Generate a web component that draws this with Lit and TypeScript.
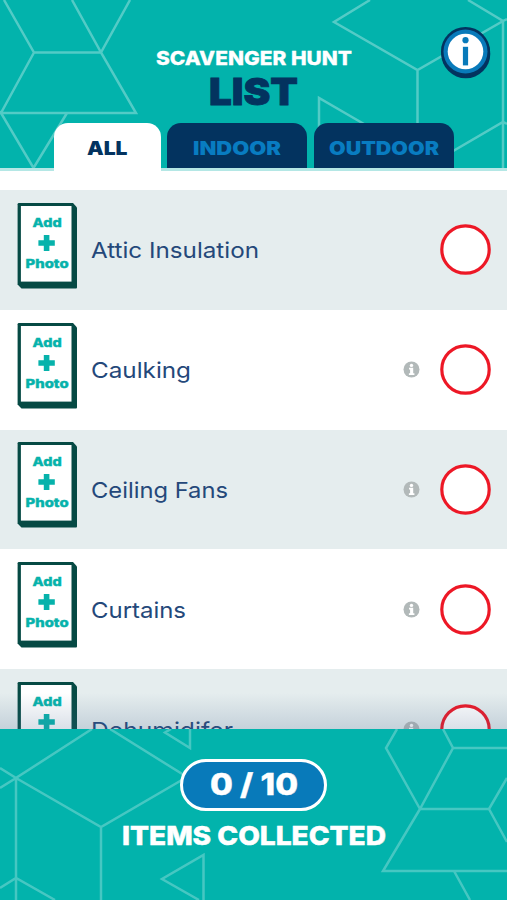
import { LitElement, html, svg, css, nothing } from "lit";
import { customElement, property, state } from "lit/decorators.js";
import { classMap } from "lit/directives/class-map.js";

/** One line of text stretched to a fixed measure, for the wide display lettering. */
@customElement("fit-text")
export class FitText extends LitElement {
  @property() text = "";
  @property({ type: Number }) measure = 100;
  @property({ type: Number }) size = 16;

  static styles = css`
    :host { display: block; line-height: 0; }
    svg { display: block; overflow: visible; }
    text { font-family: Inter, "Open Sans", sans-serif; fill: currentColor; }
  `;

  render() {
    const cap = this.size * 0.727;
    return html`<svg width=${this.measure} height=${cap}>
      ${svg`<text x="0" y=${cap} font-size=${this.size} textLength=${this.measure} lengthAdjust="spacingAndGlyphs">${this.text}</text>`}
    </svg>`;
  }
}

@customElement("photo-card")
export class PhotoCard extends LitElement {
  static styles = css`
    :host { display: block; width: 60px; height: 86px; }
    svg { display: block; }
    text { font-family: Inter, sans-serif; font-weight: 800; font-size: 12.2px; fill: #06b2ab; stroke: #06b2ab; stroke-width: 0.4px; }
  `;

  render() {
    return html`<svg width="60" height="86" viewBox="0 0 60 86">
      <path d="M2 0H56L60 4.5V84.5Q60 85.6 59 85.6H4.5L.6 81.5V1.2Q.6 0 2 0Z" fill="#064a44" />
      <rect x="3.9" y="3" width="50.6" height="75.6" fill="#fff" />
      <text x="15.6" y="24" textLength="29" lengthAdjust="spacingAndGlyphs">Add</text>
      <path d="M26.8 32h5.6v5.3h5.4v5.5h-5.4V48h-5.6v-5.2h-5.4v-5.5h5.4z" fill="#06b2ab" />
      <text x="8.6" y="64.8" textLength="43" lengthAdjust="spacingAndGlyphs">Photo</text>
    </svg>`;
  }
}

interface Item {
  name: string;
  measure: number;
  info: boolean;
}

const ITEMS: Item[] = [
  { name: "Attic Insulation", measure: 168, info: false },
  { name: "Caulking", measure: 100, info: true },
  { name: "Ceiling Fans", measure: 137, info: true },
  { name: "Curtains", measure: 95, info: true },
  { name: "Dehumidifer", measure: 142, info: true },
];

const TABS = [
  { name: "ALL", measure: 40.5, width: 107 },
  { name: "INDOOR", measure: 88, width: 140 },
  { name: "OUTDOOR", measure: 110, width: 140 },
];

@customElement("app-root")
export class AppRoot extends LitElement {
  @state() private tab = "ALL";

  static styles = css`
    :host {
      display: flex;
      flex-direction: column;
      position: relative;
      width: 507px;
      height: 900px;
      overflow: hidden;
      background: #fff;
      font-family: Inter, sans-serif;
    }
    .header {
      position: relative;
      flex: none;
      height: 171px;
      box-sizing: border-box;
      border-bottom: 3px solid #b4e7e5;
      background: #02b3ac;
      display: flex;
      flex-direction: column;
      align-items: center;
    }
    .lines { position: absolute; left: 0; top: 0; fill: none; stroke: #fff; stroke-opacity: 0.32; stroke-width: 2.5; }
    .footer .lines { stroke-opacity: 0.27; }
    .kicker { position: relative; margin-top: 51px; color: #fff; font-weight: 800; stroke: currentColor; stroke-width: 0.3px; }
    .title { position: relative; margin-top: 12.5px; color: #03335f; font-weight: 900; stroke: currentColor; stroke-width: 0.8px; }
    .tabs { position: relative; display: flex; gap: 6.5px; margin-top: auto; height: 45.5px; }
    .tab {
      display: flex;
      justify-content: center;
      box-sizing: border-box;
      height: 45.5px;
      padding-top: 18px;
      border-radius: 14px 14px 0 0;
      background: #03335f;
      color: #087cc1;
      font-weight: 900;
      cursor: pointer;
    }
    .tab.active { background: #fff; color: #03335f; height: 48.5px; }
    .help { position: absolute; left: 440px; top: 26px; }
    .list { flex: none; margin-top: 19px; height: 539px; overflow: hidden; }
    .row { display: flex; align-items: center; box-sizing: border-box; height: 119.8px; padding: 0 16px 0 17px; }
    .row:nth-child(odd) { background: #e5edee; }
    .photo { margin-top: -8px; }
    .name { margin: 1px auto 0 14px; color: #24487a; font-weight: 370; }
    .info { margin-right: 20px; }
    .footer {
      position: relative;
      flex: none;
      height: 171px;
      background: #02b3ac;
      display: flex;
      flex-direction: column;
      align-items: center;
    }
    .fade {
      position: absolute;
      left: 0;
      bottom: 100%;
      width: 100%;
      height: 36px;
      background: linear-gradient(rgba(70, 100, 140, 0), rgba(70, 100, 140, 0.2));
    }
    .count {
      position: relative;
      display: flex;
      align-items: center;
      justify-content: center;
      box-sizing: border-box;
      width: 147px;
      height: 52.5px;
      margin-top: 29.5px;
      border: 3.5px solid #fff;
      border-radius: 27px;
      background: #087aba;
      color: #fff;
      font-weight: 800;
      stroke: currentColor;
      stroke-width: 0.4px;
    }
    .caption { position: relative; margin-top: 15px; color: #fff; font-weight: 800; stroke: currentColor; stroke-width: 0.5px; }
  `;

  render() {
    return html`
      <div class="header">
        <svg class="lines" width="507" height="168">
          <path d="M4 0L34 52.5H101L72 0M130 0L101 52.5L136 113H1L34 52.5M0 111L1 113L33.5 168L67 113" />
          <path d="M370 0L334 22L417.5 70L503 21L468 0M507 19L503 21V168M417.5 70V168M319 168V98L364 124M424 168L503 122L507 124" />
        </svg>
        <fit-text class="kicker" text="SCAVENGER HUNT" .measure=${196} .size=${19.3}></fit-text>
        <fit-text class="title" text="LIST" .measure=${89} .size=${37}></fit-text>
        <div class="tabs">
          ${TABS.map(
            (t) => html`<div
              class=${classMap({ tab: true, active: t.name === this.tab })}
              style="width:${t.width}px"
              @click=${() => (this.tab = t.name)}
            >
              <fit-text .text=${t.name} .measure=${t.measure} .size=${18.8}></fit-text>
            </div>`
          )}
        </div>
        <svg class="help" width="52" height="54">
          <circle cx="25.8" cy="27.8" r="24.5" fill="#03335f" />
          <circle cx="25.5" cy="25.5" r="24.5" fill="#03335f" />
          <circle cx="25.5" cy="25.5" r="22" fill="#087aba" />
          <circle cx="25.5" cy="25.5" r="17.8" fill="#fff" />
          <circle cx="25.5" cy="14.2" r="3.1" fill="#087aba" />
          <rect x="22.9" y="20.8" width="5.2" height="18.6" fill="#087aba" />
        </svg>
      </div>
      <div class="list">
        ${ITEMS.map(
          (item) => html`<div class="row">
            <photo-card class="photo"></photo-card>
            <fit-text class="name" .text=${item.name} .measure=${item.measure} .size=${22}></fit-text>
            ${item.info
              ? html`<svg class="info" width="17" height="17">
                  <circle cx="8.5" cy="8.5" r="8" fill="#b2b9b9" />
                  <circle cx="8.5" cy="4.4" r="1.7" fill="#fff" />
                  <path d="M6 6.8h4.2v5.4h1.2v1.7H5.9v-1.7h1.2V8.5H6z" fill="#fff" />
                </svg>`
              : nothing}
            <svg width="51" height="51">
              <circle cx="25.5" cy="25.5" r="23.7" fill="#fff" stroke="#ed1826" stroke-width="3.2" />
            </svg>
          </div>`
        )}
      </div>
      <div class="footer">
        <div class="fade"></div>
        <svg class="lines" width="507" height="171" viewBox="0 729 507 171">
          <path d="M92 729L16 778L101 827L187 777L110 729M171 729L165 732.5L190 748V729M16 778V900M101 827V900M0 768L16 778L0 788M0 888L16 878L55 900M203.5 900V855L162 879L199 900" />
          <path d="M397 729L386 748L420 809L453 748L443 729M453 748H507M420 809H489L507 778M489 809L507 842M420 809L383 871H507M454 871L470 900" />
        </svg>
        <div class="count">
          <fit-text text="0 / 10" .measure=${88} .size=${29.5}></fit-text>
        </div>
        <fit-text class="caption" text="ITEMS COLLECTED" .measure=${264} .size=${26}></fit-text>
      </div>
    `;
  }
}
